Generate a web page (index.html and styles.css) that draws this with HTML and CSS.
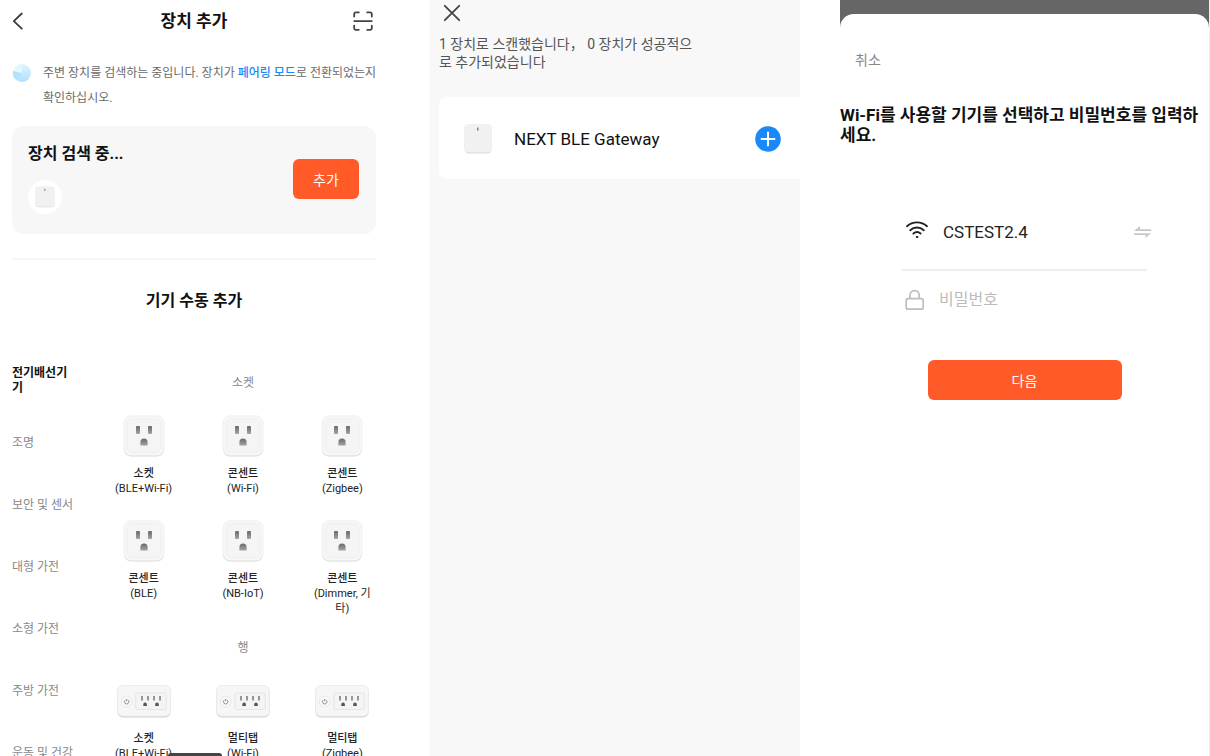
FILE: index.html
```html
<!DOCTYPE html>
<html lang="ko">
<head>
    <meta charset="UTF-8">
    <meta name="viewport" content="width=device-width, initial-scale=1.0">
    <title>장치 추가</title>
    <link rel="stylesheet" href="styles.css">
</head>

<body>
    <!-- Shared icons -->
    <svg class="defs" width="0" height="0" aria-hidden="true">
        <defs>
            <linearGradient id="hole" x1="0" y1="0" x2="0" y2="1">
                <stop offset="0" stop-color="#6a6a6a"/>
                <stop offset="1" stop-color="#a4a4a4"/>
            </linearGradient>
            <linearGradient id="wave" x1="0" y1="0" x2="0" y2="1">
                <stop offset="0" stop-color="#e0f4ff"/>
                <stop offset="1" stop-color="#b0dfff"/>
            </linearGradient>
        </defs>
        <symbol id="socket" viewBox="0 0 42 42">
            <rect x="1" y="2" width="40" height="39.6" rx="7" fill="#d9d9d9"/>
            <rect x="1" y="0.8" width="40" height="39.8" rx="7" fill="#f7f7f7" stroke="#e9e9e9" stroke-width="0.6"/>
            <rect x="4" y="4" width="34" height="33.5" rx="5" fill="#f5f5f5" stroke="#ececec" stroke-width="0.7"/>
            <rect x="13" y="11" width="4" height="8" rx="1" fill="url(#hole)"/>
            <rect x="25" y="11" width="4" height="8" rx="1" fill="url(#hole)"/>
            <path d="M17.4 30.5v-3.3a3.6 3.6 0 0 1 7.2 0v3.3z" fill="url(#hole)"/>
        </symbol>
        <symbol id="strip" viewBox="0 0 54 42">
            <rect x="0.6" y="7" width="52.8" height="30.5" rx="5" fill="#cfcfcf"/>
            <rect x="0.6" y="5.5" width="52.8" height="30.8" rx="5" fill="#f6f6f6" stroke="#e6e6e6" stroke-width="0.7"/>
            <circle cx="9.7" cy="21.5" r="5.5" fill="#f8f8f8" stroke="#e3e3e3" stroke-width="0.7"/>
            <path d="M8.5 19.9a2.2 2.2 0 1 0 2.4 0M9.7 19v2.2" fill="none" stroke="#777" stroke-width="0.8"/>
            <rect x="18.8" y="13" width="30.5" height="16.5" rx="1.5" fill="#f4f4f4" stroke="#dedede" stroke-width="0.7"/>
            <path d="M25 16v4.5M31 16v4.5M37 16v4.5M43 16v4.5" stroke="#777" stroke-width="1.5"/>
            <path d="M26.3 26v-1.6a1.8 1.8 0 0 1 3.6 0V26zM38.2 26v-1.6a1.8 1.8 0 0 1 3.6 0V26z" fill="#555"/>
        </symbol>
        <symbol id="gateway" viewBox="0 0 28 30">
            <rect x="1.5" y="3" width="25" height="26.5" rx="2.5" fill="#dadada"/>
            <rect x="0.5" y="0.5" width="27" height="27.8" rx="3.5" fill="#f1f1f1" stroke="#ebebeb" stroke-width="0.6"/>
            <path d="M13.8 3.5v3" stroke="#666" stroke-width="1.2"/>
        </symbol>
    </svg>

    <main class="screens">
        <!-- Add device -->
        <section class="screen add">
            <header class="topbar">
                <button class="icon-btn" type="button" aria-label="뒤로">
                    <svg width="12" height="18" viewBox="0 0 12 18" fill="none" stroke="#3a3a3a" stroke-width="1.8" stroke-linecap="round" stroke-linejoin="round"><path d="M9.8 1.5 1.8 9.2l8 7.5"/></svg>
                </button>
                <h1>장치 추가</h1>
                <button class="icon-btn scan-btn" type="button" aria-label="스캔">
                    <svg width="20" height="20" viewBox="0 0 20 20" fill="none" stroke="#444" stroke-width="1.8" stroke-linecap="round"><path d="M1.2 5.6V3a1.6 1.6 0 0 1 1.6-1.6h3M14.2 1.4h3A1.6 1.6 0 0 1 18.8 3v2.6M18.8 14.6v2.6a1.6 1.6 0 0 1-1.6 1.6h-3M5.8 18.8h-3a1.6 1.6 0 0 1-1.6-1.6v-2.6M1.2 10.1h17.6"/></svg>
                </button>
            </header>

            <div class="notice">
                <svg width="20" height="20" viewBox="0 0 20 20">
                    <circle cx="10" cy="10" r="9" fill="url(#wave)"/>
                    <path d="M10 10 1.2 8A9 9 0 0 0 5 17.5z" fill="#b4e1ff"/>
                    <path d="M10 10 1.2 8A9 9 0 0 1 10 1z" fill="#e4f6ff"/>
                </svg>
                <p>주변 장치를 검색하는 중입니다. 장치가 <a href="#">페어링 모드</a>로 전환되었는지 확인하십시오.</p>
            </div>

            <div class="search-card">
                <div>
                    <h2>장치 검색 중...</h2>
                    <div class="found">
                        <svg width="20" height="22"><use href="#gateway"/></svg>
                    </div>
                </div>
                <button class="primary small" type="button">추가</button>
            </div>

            <h2 class="manual-title">기기 수동 추가</h2>

            <div class="manual">
                <nav class="categories">
                    <a class="active" href="#">전기배선기기</a>
                    <a href="#">조명</a>
                    <a href="#">보안 및 센서</a>
                    <a href="#">대형 가전</a>
                    <a href="#">소형 가전</a>
                    <a href="#">주방 가전</a>
                    <a href="#">운동 및 건강</a>
                </nav>

                <div class="devices">
                    <h3>소켓</h3>
                    <a class="device" href="#"><svg><use href="#socket"/></svg><b>소켓</b><span>(BLE+Wi-Fi)</span></a>
                    <a class="device" href="#"><svg><use href="#socket"/></svg><b>콘센트</b><span>(Wi-Fi)</span></a>
                    <a class="device" href="#"><svg><use href="#socket"/></svg><b>콘센트</b><span>(Zigbee)</span></a>
                    <a class="device" href="#"><svg><use href="#socket"/></svg><b>콘센트</b><span>(BLE)</span></a>
                    <a class="device" href="#"><svg><use href="#socket"/></svg><b>콘센트</b><span>(NB-IoT)</span></a>
                    <a class="device" href="#"><svg><use href="#socket"/></svg><b>콘센트</b><span>(Dimmer, 기타)</span></a>

                    <h3>행</h3>
                    <a class="device" href="#"><svg><use href="#strip"/></svg><b>소켓</b><span>(BLE+Wi-Fi)</span></a>
                    <a class="device" href="#"><svg><use href="#strip"/></svg><b>멀티탭</b><span>(Wi-Fi)</span></a>
                    <a class="device" href="#"><svg><use href="#strip"/></svg><b>멀티탭</b><span>(Zigbee)</span></a>
                </div>
            </div>

            <div class="home-bar"></div>
        </section>

        <!-- Scan result -->
        <section class="screen scan">
            <button class="icon-btn" type="button" aria-label="닫기">
                <svg width="18" height="18" viewBox="0 0 18 18" fill="none" stroke="#444" stroke-width="1.8" stroke-linecap="round"><path d="M1.8 1.8l14.4 14.4M16.2 1.8 1.8 16.2"/></svg>
            </button>
            <p class="scan-text">1 장치로 스캔했습니다， 0 장치가 성공적으로 추가되었습니다</p>
            <div class="result">
                <svg width="28" height="30"><use href="#gateway"/></svg>
                <span>NEXT BLE Gateway</span>
                <button class="icon-btn" type="button" aria-label="추가">
                    <svg width="26" height="26" viewBox="0 0 26 26"><circle cx="13" cy="13" r="12.8" fill="#1989fa"/><path d="M13 6.6v12.8M6.6 13h12.8" stroke="#fff" stroke-width="2" stroke-linecap="round"/></svg>
                </button>
            </div>
        </section>

        <!-- Wi-Fi password -->
        <section class="screen wifi">
            <form class="sheet">
                <button class="cancel" type="button">취소</button>
                <h2>Wi-Fi를 사용할 기기를 선택하고 비밀번호를 입력하세요.</h2>
                <div class="fields">
                    <div class="field network">
                        <svg width="24" height="24" viewBox="0 0 24 24" fill="none" stroke="#222" stroke-width="1.9" stroke-linecap="round"><path d="M2 6.2a15 15 0 0 1 20 0M5.2 10.2a10 10 0 0 1 13.6 0M8.4 13.6a5.6 5.6 0 0 1 7.2 0"/><circle cx="12" cy="17" r="0.8" fill="#222" stroke-width="1"/></svg>
                        <input type="text" value="CSTEST2.4" aria-label="Wi-Fi" readonly>
                        <button class="icon-btn swap" type="button" aria-label="네트워크 변경">
                            <svg width="20" height="12" viewBox="0 0 20 12" fill="#c8c8c8"><path d="M1 4.9 7 0v3.2h11.2v1.7zM18.2 7.3l-5.8 4.7V9H1V7.3z"/></svg>
                        </button>
                    </div>
                    <div class="field">
                        <svg width="20" height="22" viewBox="0 0 20 22" fill="none" stroke="#bdbdbd" stroke-width="1.7"><rect x="1.2" y="9.6" width="17" height="10.6" rx="2"/><path d="M5 9.6V6.2a4.6 4.6 0 0 1 9.2 0v3.4"/></svg>
                        <input type="password" placeholder="비밀번호" aria-label="비밀번호">
                    </div>
                </div>
                <button class="primary next" type="button">다음</button>
            </form>
        </section>
    </main>
</body>

</html>
```
FILE: styles.css
```css
* {
    box-sizing: border-box;
}

body {
    margin: 0;
    background: #fff;
    color: #111;
    font-family: Roboto, "Noto Sans CJK KR", sans-serif;
}

h1,
h2,
h3,
p {
    margin: 0;
}

a {
    color: inherit;
    text-decoration: none;
}

svg {
    display: block;
    flex: none;
}

button,
input {
    font-family: inherit;
    border: none;
    padding: 0;
    background: none;
}

button {
    cursor: pointer;
}

.defs {
    position: absolute;
}

.screens {
    display: grid;
    grid-template-columns: 389fr 371fr 370fr;
    grid-template-rows: 100vh;
    column-gap: 40px;
}

.screen {
    position: relative;
    min-width: 0;
    overflow: hidden;
}

.icon-btn {
    display: block;
    flex: none;
}

.primary {
    background: #ff5a28;
    color: #fff;
    border-radius: 6px;
    font-size: 14px;
    height: 40px;
}

/* add device */
.add {
    padding: 0 13px 0 12px;
}

.topbar {
    display: grid;
    grid-template-columns: 1fr auto 1fr;
    align-items: center;
    height: 41px;
}

.topbar h1 {
    font-size: 17px;
    line-height: 24px;
}

.scan-btn {
    justify-self: end;
    margin-right: 3px;
}

.notice {
    display: flex;
    gap: 11px;
    margin: 20px -8px 0 0;
    font-size: 12px;
    line-height: 25px;
    color: #6b6b6b;
}

.notice svg {
    margin-top: 2px;
}

.notice a {
    color: #1989fa;
    font-weight: 500;
}

.search-card {
    display: flex;
    justify-content: space-between;
    align-items: center;
    margin-top: 15px;
    padding: 18px 17px 20px 16px;
    background: #f7f7f7;
    border-radius: 12px;
}

.search-card h2 {
    font-size: 16px;
    line-height: 20px;
}

.found {
    display: flex;
    align-items: center;
    justify-content: center;
    width: 34px;
    height: 34px;
    margin-top: 16px;
    background: #fff;
    border-radius: 50%;
}

.small {
    width: 66px;
}

.manual-title {
    margin-top: 24px;
    padding-top: 29px;
    border-top: 2px solid #f7f7f7;
    font-size: 16px;
    line-height: 24px;
    text-align: center;
}

.manual {
    display: flex;
    gap: 36px;
    margin-top: 37px;
}

.categories {
    width: 64px;
    flex: none;
    color: #888;
    font-size: 12px;
    line-height: 15px;
}

.categories a {
    display: flex;
    align-items: center;
    height: 62px;
}

.categories .active {
    color: #111;
    font-weight: 700;
}

.devices {
    display: grid;
    grid-template-columns: repeat(3, 1fr);
    gap: 24px 36px;
    flex: 1;
    align-content: start;
    padding: 25px 2px 0 0;
}

.devices h3 {
    grid-column: 1 / -1;
    color: #888;
    font-size: 12px;
    font-weight: 400;
    line-height: 16px;
    text-align: center;
}

.device {
    display: flex;
    flex-direction: column;
    align-items: center;
    color: #222;
    font-size: 11px;
    line-height: 15px;
    text-align: center;
}

.device svg {
    width: 54px;
    height: 42px;
    margin-bottom: 9px;
}

.device b {
    font-weight: 500;
}

.home-bar {
    position: absolute;
    left: 168px;
    bottom: 0;
    width: 54px;
    height: 3px;
    background: #444;
    border-radius: 8px 8px 0 0;
}

/* scan result */
.scan {
    padding: 4px 0 0 10px;
    background: #f8f8f8;
}

.scan > .icon-btn {
    margin-left: 4px;
}

.scan-text {
    max-width: 260px;
    margin-top: 13px;
    color: #555;
    font-size: 14px;
    line-height: 18px;
}

.result {
    display: flex;
    align-items: center;
    height: 82px;
    margin-top: 26px;
    padding: 2px 19px 0 25px;
    background: #fff;
    border-radius: 8px 0 0 8px;
    font-size: 17px;
    line-height: 24px;
}

.result span {
    flex: 1;
    margin-left: 22px;
}

/* wifi password */
.wifi {
    padding-top: 14px;
    background: #666;
    border-right: 1px solid #eee;
}

.sheet {
    min-height: 100%;
    padding-top: 36px;
    background: #fff;
    border-radius: 14px 14px 0 0;
}

.cancel {
    display: block;
    margin-left: 15px;
    color: #888;
    font-size: 14px;
    line-height: 20px;
}

.sheet h2 {
    margin-top: 35px;
    font-size: 17px;
    line-height: 20px;
}

.fields {
    margin: 50px 62px 0;
}

.field {
    display: flex;
    align-items: center;
    height: 58px;
    padding-left: 3px;
}

.field input {
    flex: 1;
    min-width: 0;
    margin-left: 14px;
    color: #222;
    font-size: 16px;
    line-height: 24px;
    outline: none;
}

.field input::placeholder {
    color: #bbb;
}

.network {
    height: 76px;
    border-bottom: 2px solid #eee;
}

.network input {
    font-size: 17px;
}

.swap {
    margin-right: -6px;
}

.next {
    display: block;
    width: 194px;
    margin: 31px auto 0;
}
```
